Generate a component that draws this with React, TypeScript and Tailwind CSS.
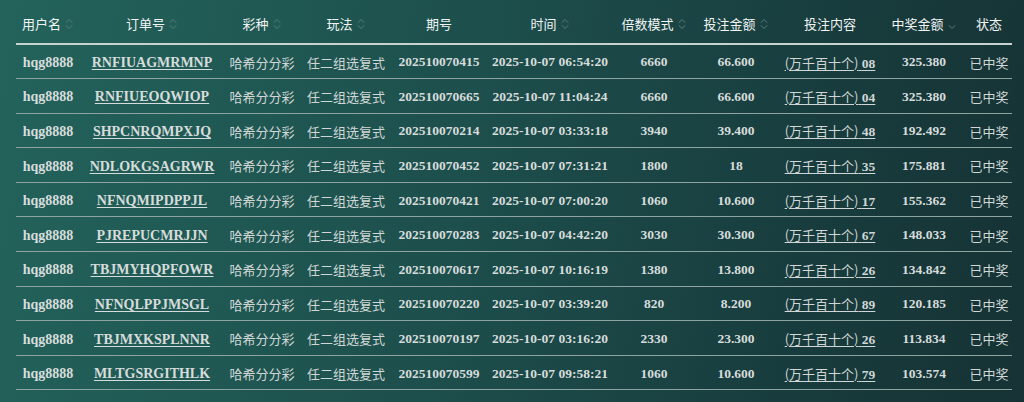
import React from "react";

type Row = {
  user: string;
  order: string;
  issue: string;
  time: string;
  multiple: string;
  amount: string;
  digits: string;
  win: string;
};

const rows: Row[] = [
  { user: "hqg8888", order: "RNFIUAGMRMNP", issue: "202510070415", time: "2025-10-07 06:54:20", multiple: "6660", amount: "66.600", digits: "08", win: "325.380" },
  { user: "hqg8888", order: "RNFIUEOQWIOP", issue: "202510070665", time: "2025-10-07 11:04:24", multiple: "6660", amount: "66.600", digits: "04", win: "325.380" },
  { user: "hqg8888", order: "SHPCNRQMPXJQ", issue: "202510070214", time: "2025-10-07 03:33:18", multiple: "3940", amount: "39.400", digits: "48", win: "192.492" },
  { user: "hqg8888", order: "NDLOKGSAGRWR", issue: "202510070452", time: "2025-10-07 07:31:21", multiple: "1800", amount: "18", digits: "35", win: "175.881" },
  { user: "hqg8888", order: "NFNQMIPDPPJL", issue: "202510070421", time: "2025-10-07 07:00:20", multiple: "1060", amount: "10.600", digits: "17", win: "155.362" },
  { user: "hqg8888", order: "PJREPUCMRJJN", issue: "202510070283", time: "2025-10-07 04:42:20", multiple: "3030", amount: "30.300", digits: "67", win: "148.033" },
  { user: "hqg8888", order: "TBJMYHQPFOWR", issue: "202510070617", time: "2025-10-07 10:16:19", multiple: "1380", amount: "13.800", digits: "26", win: "134.842" },
  { user: "hqg8888", order: "NFNQLPPJMSGL", issue: "202510070220", time: "2025-10-07 03:39:20", multiple: "820", amount: "8.200", digits: "89", win: "120.185" },
  { user: "hqg8888", order: "TBJMXKSPLNNR", issue: "202510070197", time: "2025-10-07 03:16:20", multiple: "2330", amount: "23.300", digits: "26", win: "113.834" },
  { user: "hqg8888", order: "MLTGSRGITHLK", issue: "202510070599", time: "2025-10-07 09:58:21", multiple: "1060", amount: "10.600", digits: "79", win: "103.574" },
];

const serif = "font-['Liberation_Serif',serif] font-bold text-[13.5px] text-[#d6dcdb]";
const cjk = "font-['Noto_Sans_CJK_SC',sans-serif] text-[13px] text-[#d0d7d6]";

function SortIcon({ only }: { only?: "down" }) {
  return (
    <svg className="w-[10px] h-[14px] ml-[3px] shrink-0" viewBox="0 0 10 14" fill="none" stroke="#587e7b" strokeWidth={1} strokeLinecap="round" strokeLinejoin="round">
      {only !== "down" && <path d="M2 5.5 L5 2.5 L8 5.5" />}
      <path d="M2 8.5 L5 11.5 L8 8.5" />
    </svg>
  );
}

const cols: { label: string; w: string; sort?: boolean; down?: boolean }[] = [
  { label: "用户名", w: "w-[64px]", sort: true },
  { label: "订单号", w: "w-[144px]", sort: true },
  { label: "彩种", w: "w-[76px]", sort: true },
  { label: "玩法", w: "w-[92px]", sort: true },
  { label: "期号", w: "w-[94px]" },
  { label: "时间", w: "w-[128px]", sort: true },
  { label: "倍数模式", w: "w-[80px]", sort: true },
  { label: "投注金额", w: "w-[84px]", sort: true },
  { label: "投注内容", w: "w-[104px]" },
  { label: "中奖金额", w: "w-[84px]", down: true },
  { label: "状态", w: "w-[46px]" },
];

export default function App() {
  return (
    <div className="w-[1024px] h-[402px] overflow-hidden bg-[linear-gradient(100deg,#23635b_0%,#1d4f4c_45%,#183c3d_78%,#163234_100%)]">
      <div className="pl-[16px] pr-[12px]">
        <table className="table-fixed border-collapse w-[996px]">
          <thead>
            <tr className="border-b-2 border-[#c6d3d1]">
              {cols.map((c) => (
                <th key={c.label} className={`${c.w} h-[44px] p-0 pt-[4px] font-normal`}>
                  <div className="flex items-center justify-center font-['Noto_Sans_CJK_SC',sans-serif] text-[13px] text-[#f0f4f3]">
                    {c.label}
                    {c.sort && <SortIcon />}
                    {c.down && <SortIcon only="down" />}
                  </div>
                </th>
              ))}
            </tr>
          </thead>
          <tbody>
            {rows.map((r) => (
              <tr key={r.order} className="border-b border-[#8ea4a1] h-[34.6px] text-center">
                <td className={`p-0 pt-[2px] ${serif} text-[14px]`}>{r.user}</td>
                <td className={`p-0 pt-[2px] ${serif} text-[14px]`}>
                  <span className="underline underline-offset-2 decoration-1">{r.order}</span>
                </td>
                <td className={`p-0 pt-[2px] ${cjk}`}>哈希分分彩</td>
                <td className={`p-0 pt-[2px] ${cjk}`}>任二组选复式</td>
                <td className={`p-0 pt-[2px] ${serif}`}>{r.issue}</td>
                <td className={`p-0 pt-[2px] ${serif} whitespace-nowrap`}>{r.time}</td>
                <td className={`p-0 pt-[2px] ${serif}`}>{r.multiple}</td>
                <td className={`p-0 pt-[2px] ${serif}`}>{r.amount}</td>
                <td className="p-0">
                  <span className="underline underline-offset-2 decoration-1 text-[#d0d7d6] whitespace-nowrap leading-none">
                    <span className="font-['Noto_Sans_CJK_SC',sans-serif] text-[13px]">(万千百十个)</span>
                    <span className="font-['Liberation_Serif',serif] font-bold text-[13.5px]"> {r.digits}</span>
                  </span>
                </td>
                <td className={`p-0 pt-[2px] ${serif}`}>{r.win}</td>
                <td className={`p-0 pt-[2px] ${cjk}`}>已中奖</td>
              </tr>
            ))}
          </tbody>
        </table>
      </div>
    </div>
  );
}
